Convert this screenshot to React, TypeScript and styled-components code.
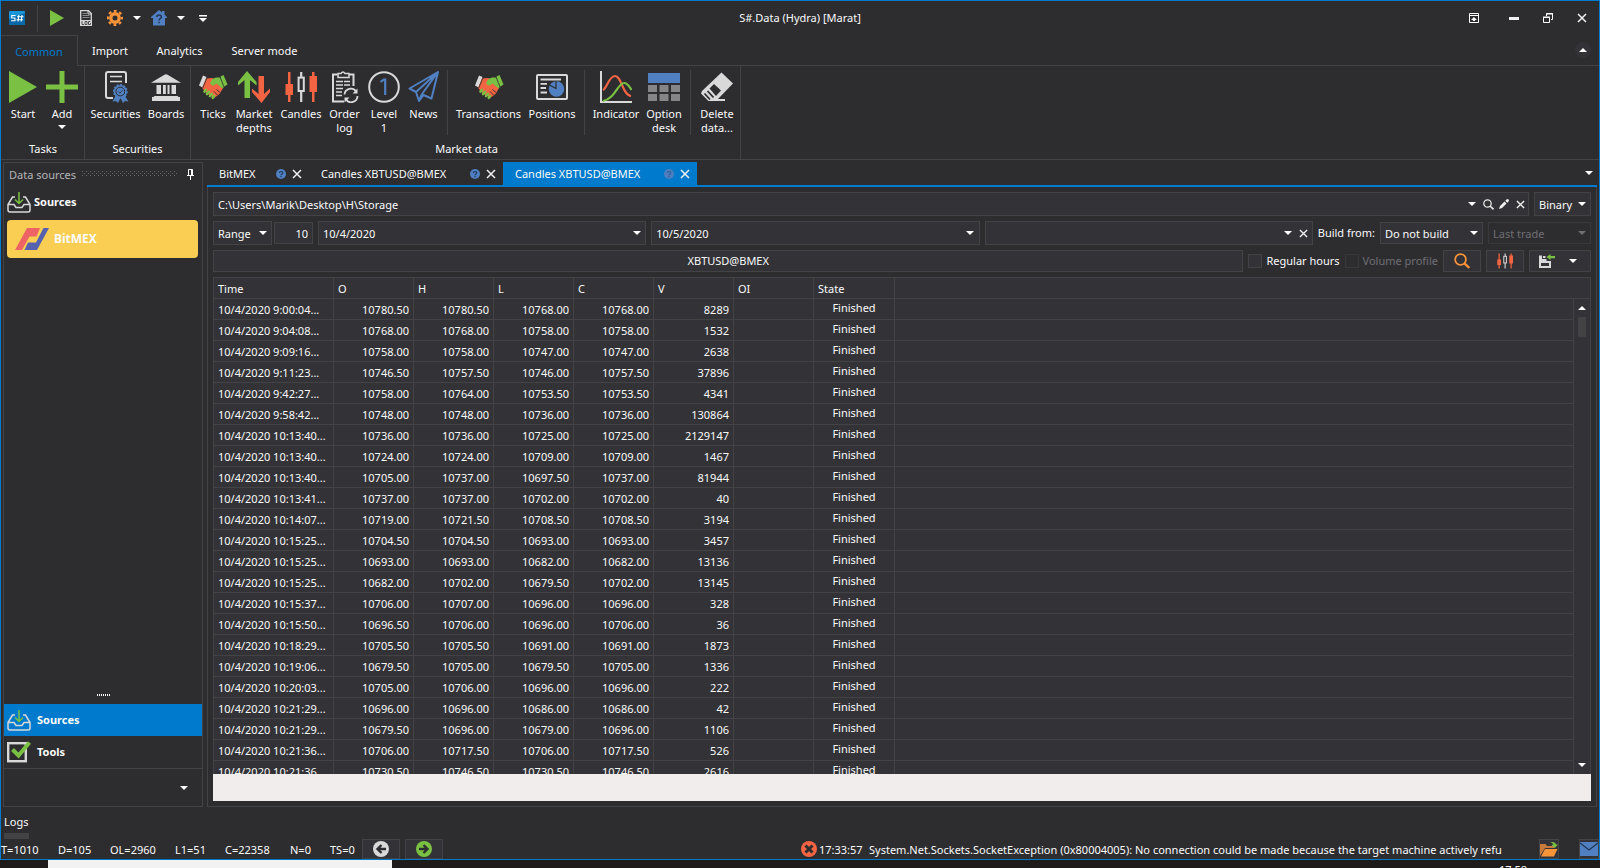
import React from 'react';
import styled, { createGlobalStyle } from 'styled-components';

const c = {
  bg: '#2d2d30',
  field: '#333337',
  line: '#434346',
  text: '#fafafa',
  dim: '#6f6f73',
  accent: '#007acc',
  green: '#7ac143',
  red: '#f26442',
  blue: '#5080c2',
  grey: '#d9d9d9',
  orange: '#f7943a',
};

const GlobalStyle = createGlobalStyle`
  * { box-sizing: border-box; }
  body {
    margin: 0;
    background: ${c.bg};
    color: ${c.text};
    font: 11px/14px "Noto Sans", "Open Sans", sans-serif;
  }
  button, input, select { font: inherit; color: inherit; margin: 0; }
  svg { display: block; flex: none; }
`;

const Page = styled.div`
  display: flex;
  flex-direction: column;
  height: 100vh;
  overflow: hidden;
`;

const Window = styled.div`
  flex: 1;
  min-height: 0;
  display: flex;
  flex-direction: column;
  border: 1px solid ${c.accent};
`;

const PlainButton = styled.button`
  display: flex;
  align-items: center;
  justify-content: center;
  padding: 0;
  border: 0;
  background: none;
`;

/* Title bar */
const TitleBar = styled.header`
  display: grid;
  grid-template-columns: 1fr auto 1fr;
  align-items: center;
  height: 34px;
  flex: none;
`;
const QuickAccess = styled.div`
  display: flex;
  align-items: center;
  padding-left: 8px;
`;
const QuickRule = styled.div`
  width: 1px;
  height: 27px;
  margin: 0 4px 0 12px;
  background: ${c.line};
`;
const ToolButton = styled(PlainButton)<{ $w: number; $h?: number }>`
  width: ${(p) => p.$w}px;
  height: ${(p) => p.$h ?? 26}px;
  flex: none;
`;
const Title = styled.h1`
  margin: 0;
  font-size: 11px;
  font-weight: 400;
`;
const WindowButtons = styled.div`
  display: flex;
  justify-content: flex-end;
`;

/* Ribbon */
const RibbonTabs = styled.nav`
  display: flex;
  height: 31px;
  flex: none;
`;
const RibbonTab = styled(PlainButton)<{ $w: number; $active?: boolean }>`
  width: ${(p) => p.$w}px;
  padding-top: 1px;
  border: solid ${c.line};
  border-width: ${(p) => (p.$active ? '1px 1px 0 0' : '0 0 1px')};
  color: ${(p) => (p.$active ? c.accent : c.text)};
`;
const RibbonTabFill = styled.div`
  flex: 1;
  display: flex;
  justify-content: flex-end;
  align-items: center;
  padding-right: 8px;
  border-bottom: 1px solid ${c.line};
`;
const Collapse = styled(PlainButton)`
  width: 16px;
  height: 16px;
  border-radius: 8px;
  background: ${c.field};
`;
const Ribbon = styled.div`
  display: flex;
  height: 94px;
  flex: none;
  border-bottom: 1px solid ${c.line};
`;
const Group = styled.section<{ $pad: string }>`
  display: flex;
  flex-direction: column;
  justify-content: space-between;
  padding: ${(p) => p.$pad};
  border-right: 1px solid ${c.line};
`;
const GroupItems = styled.div<{ $gap?: number }>`
  display: flex;
  gap: ${(p) => p.$gap ?? 0}px;
`;
const GroupName = styled.div`
  text-align: center;
`;
const GroupRule = styled.div`
  width: 1px;
  height: 65px;
  margin: 4px 4px 0 5px;
  background: ${c.line};
`;
const RibbonItem = styled.button<{ $w: number }>`
  width: ${(p) => p.$w}px;
  display: flex;
  flex-direction: column;
  align-items: center;
  gap: 4px;
  padding: 5px 0 0;
  border: 0;
  background: none;
  white-space: pre;
`;

/* Body */
const Body = styled.main`
  flex: 1;
  min-height: 0;
  display: flex;
  gap: 4px;
  padding: 2px 2px 0;
`;
const Side = styled.aside`
  width: 200px;
  flex: none;
  display: flex;
  flex-direction: column;
  border: 1px solid ${c.line};
`;
const SideHeader = styled.div`
  display: flex;
  align-items: center;
  gap: 6px;
  height: 23px;
  padding: 0 8px 0 5px;
  color: #b5b5b8;
`;
const Grip = styled.div`
  flex: 1;
  height: 6px;
  margin: 0 4px 2px 0;
  background:
    radial-gradient(circle at 0 0, #68686c 1px, transparent 1px) 0 0 / 4px 4px,
    radial-gradient(circle at 0 0, #68686c 1px, transparent 1px) 2px 2px / 4px 4px;
`;
const SideTitle = styled.h2`
  display: flex;
  align-items: center;
  gap: 3px;
  height: 32px;
  margin: 0;
  padding-left: 3px;
  font-size: 11px;
`;
const Source = styled(PlainButton)`
  justify-content: flex-start;
  gap: 5px;
  height: 38px;
  margin: 2px 4px auto 3px;
  padding-left: 8px;
  border-radius: 4px;
  background: #f9ce53;
  font-size: 12px;
  font-weight: 700;
`;
const Splitter = styled.div`
  width: 13px;
  height: 2px;
  margin: 0 auto 8px;
  background: repeating-linear-gradient(90deg, ${c.text} 0 1px, transparent 1px 2px);
`;
const SideTab = styled(PlainButton)<{ $active?: boolean }>`
  justify-content: flex-start;
  gap: 6px;
  height: 32px;
  padding-left: 3px;
  font-weight: 700;
  background: ${(p) => (p.$active ? c.accent : 'none')};
`;
const SideFooter = styled.div`
  display: flex;
  align-items: center;
  justify-content: flex-end;
  height: 38px;
  padding-right: 7px;
  border-top: 1px solid ${c.line};
`;

const Content = styled.section`
  flex: 1;
  min-width: 0;
  display: flex;
  flex-direction: column;
`;
const DocTabs = styled.div`
  display: flex;
  height: 25px;
  flex: none;
  border-bottom: 2px solid ${c.accent};
`;
const DocTab = styled.div<{ $w: number; $active?: boolean }>`
  width: ${(p) => p.$w}px;
  display: flex;
  align-items: center;
  gap: 5px;
  padding: 0 6px 0 12px;
  white-space: nowrap;
  background: ${(p) => (p.$active ? c.accent : 'none')};
`;
const DocName = styled(PlainButton)`
  flex: 1;
  justify-content: flex-start;
  padding-top: 1px;
`;
const DocTabFill = styled.div`
  flex: 1;
  display: flex;
  justify-content: flex-end;
`;
const Panel = styled.div`
  flex: 1;
  min-height: 0;
  display: flex;
  flex-direction: column;
  gap: 5px;
  padding: 5px 5px;
  border: solid ${c.line};
  border-width: 0 1px 1px;
`;
const Row = styled.div<{ $gap?: number }>`
  display: flex;
  align-items: center;
  gap: ${(p) => p.$gap ?? 5}px;
  flex: none;
`;
const Field = styled.div<{ $w?: number; $h?: number; $off?: boolean }>`
  ${(p) => (p.$w ? `width: ${p.$w}px; flex: none;` : 'flex: 1; min-width: 0;')}
  height: ${(p) => p.$h ?? 24}px;
  display: flex;
  align-items: center;
  border: 1px solid ${(p) => (p.$off ? '#39393c' : c.line)};
  background: ${(p) => (p.$off ? c.bg : c.field)};
  color: ${(p) => (p.$off ? c.dim : c.text)};
`;
const Input = styled.input<{ $right?: boolean }>`
  flex: 1;
  width: 0;
  min-width: 0;
  padding: 1px 4px 0;
  border: 0;
  outline: 0;
  background: none;
  text-align: ${(p) => (p.$right ? 'right' : 'left')};
`;
const Select = styled.select`
  flex: 1;
  width: 0;
  min-width: 0;
  padding: 1px 0 0 4px;
  border: 0;
  outline: 0;
  appearance: none;
  background: none;
  opacity: 1;
`;
const SelectArrow = styled.span`
  display: flex;
  justify-content: center;
  width: 17px;
`;
const Buttons = styled.div`
  display: flex;
`;
const PushButton = styled(PlainButton)<{ $w?: number; $h?: number }>`
  ${(p) => (p.$w ? `width: ${p.$w}px;` : 'flex: 1;')}
  height: ${(p) => p.$h ?? 22}px;
  border: 1px solid ${c.line};
  background: ${c.field};
`;
const SplitGlyphs = styled.span`
  display: flex;
  align-items: center;
  gap: 14px;
  padding-right: 4px;
`;
const RowLabel = styled.label`
  white-space: nowrap;
`;
const CheckLabel = styled.label<{ $off?: boolean }>`
  display: flex;
  align-items: center;
  gap: 4px;
  white-space: nowrap;
  color: ${(p) => (p.$off ? c.dim : c.text)};
`;
const Check = styled.input`
  appearance: none;
  width: 14px;
  height: 14px;
  border: 1px solid ${c.line};
  background: ${c.field};
  &:disabled { border-color: #38383b; background: ${c.bg}; }
`;

/* Candle grid */
const GridArea = styled.div`
  position: relative;
  flex: 1;
  min-height: 0;
  overflow: hidden;
  border: solid ${c.line};
  border-width: 1px 1px 0;
  background: ${c.field};
`;
const Table = styled.table`
  width: 100%;
  table-layout: fixed;
  border-collapse: separate;
  border-spacing: 0;
`;
const Th = styled.th<{ $w?: number }>`
  ${(p) => (p.$w ? `width: ${p.$w}px;` : '')}
  height: 21px;
  padding: 1px 4px 0;
  border: solid ${c.line};
  border-width: ${(p) => (p.$w ? '0 1px 1px 0' : '0 0 1px')};
  font-weight: 400;
  text-align: left;
`;
const Td = styled.td<{ $align?: 'right' | 'center'; $last?: boolean }>`
  height: 21px;
  padding: ${(p) => (p.$align === 'center' ? '0 4px 3px' : '1px 4px 0')};
  border: solid ${c.line};
  border-width: ${(p) => (p.$last ? '0 0 1px' : '0 1px 1px 0')};
  text-align: ${(p) => p.$align ?? 'left'};
  white-space: nowrap;
`;
const ScrollBar = styled.div`
  position: absolute;
  top: 21px;
  right: 0;
  bottom: 0;
  width: 17px;
  display: flex;
  flex-direction: column;
  align-items: center;
  border-left: 1px solid ${c.line};
  background: ${c.field};
`;
const Thumb = styled.div`
  width: 8px;
  height: 20px;
  margin-bottom: auto;
  background: ${c.line};
`;
const Footer = styled.div`
  height: 27px;
  margin-top: -5px;
  flex: none;
  background: #f1edec;
`;

/* Logs and status bar */
const Logs = styled.div`
  display: flex;
  flex-direction: column;
  gap: 4px;
  height: 32px;
  flex: none;
  padding: 8px 3px 0;
`;
const LogsMark = styled.div`
  width: 25px;
  height: 6px;
  background: ${c.line};
`;
const Status = styled.footer`
  display: flex;
  height: 20px;
  flex: none;
  align-items: center;
  justify-content: space-between;
  white-space: nowrap;
`;
const Cluster = styled.div<{ $gap: number }>`
  display: flex;
  align-items: center;
  gap: ${(p) => p.$gap}px;
`;
const Counter = styled.span<{ $w: number }>`
  width: ${(p) => p.$w}px;
  padding-top: 2px;
`;
const Message = styled.span`
  min-width: 650px;
  padding-top: 2px;
`;
const Taskbar = styled.div`
  display: flex;
  justify-content: space-between;
  height: 8px;
  flex: none;
  overflow: hidden;
  padding: 0 73px 0 48px;
  background: #1f1b1b;
`;
const TaskSearch = styled.div`
  width: 344px;
  background: #f2f2f2;
`;
const Clock = styled.div`
  padding-top: 3px;
`;

/* Icons */
const Arrow = ({ up, fill = '#fff' }: { up?: boolean; fill?: string }) => (
  <svg width="8" height="4" viewBox="0 0 8 4"><path d={up ? 'M0 4L4 0L8 4z' : 'M0 0H8L4 4z'} fill={fill} /></svg>
);
const Cross = ({ s = 10, w = 1.5 }: { s?: number; w?: number }) => (
  <svg width={s} height={s} viewBox="0 0 10 10"><path d="M1 1L9 9M9 1L1 9" stroke="#f1f1f1" strokeWidth={w} /></svg>
);
const Help = ({ on }: { on?: boolean }) => (
  <svg width="10" height="10" viewBox="0 0 10 10">
    <circle cx="5" cy="5" r="5" fill={on ? '#4f7fbe' : c.blue} />
    <path d="M3.4 4C3.4 2 6.7 2 6.7 3.9C6.7 5 5 4.9 5 6.2M5 7V8.2" fill="none" stroke={on ? '#2c5f9c' : '#23385c'} strokeWidth="1.2" />
  </svg>
);
const I32 = ({ children }: { children: React.ReactNode }) => (
  <svg width="32" height="32" viewBox="0 0 32 32" fill="none">{children}</svg>
);
const Start = () => <I32><path d="M2 0L30 16L2 32z" fill={c.green} /></I32>;
const Add = () => <I32><path d="M13.5 0h5v13.5H32v5H18.5V32h-5V18.5H0v-5h13.5z" fill={c.green} /></I32>;
const Securities = () => (
  <I32>
    <path d="M13 27H8a2 2 0 0 1-2-2V3a2 2 0 0 1 2-2H24a2 2 0 0 1 2 2V12" stroke={c.grey} strokeWidth="2" />
    <path d="M10 5.5H22M10 10.5H22" stroke={c.grey} strokeWidth="1.6" />
    <path d="M15.5 25L12.5 30.5L16 30L18 32L20.5 27L23 32L25 30L28.5 30.5L25 25z" fill={c.blue} />
    <circle cx="20.3" cy="20.5" r="6.6" fill={c.blue} stroke={c.blue} strokeWidth="1.6" strokeDasharray="2 1.4" />
    <circle cx="20.3" cy="20.5" r="4.4" stroke={c.bg} strokeWidth="1" />
    <path d="M18.2 20.5L19.8 22.2L22.6 19.2" stroke={c.bg} strokeWidth=".8" />
  </I32>
);
const Boards = () => (
  <I32>
    <path d="M1 11.8L14 4q2-1.5 4 0L31 11.8z" fill={c.grey} />
    <path d="M6.5 14H11V23H6.5zM13 14H15.8V23H13zM17.5 14H19.5V23H17.5zM21.5 14H26V23H21.5z" fill={c.grey} />
    <path d="M4.5 25H27.5L28.5 26H30V30H2V26H3.5z" fill={c.grey} />
  </I32>
);
const Shake = () => (
  <I32>
    <path d="M6 4.5L9.5 6L5.500 16.500L2 14.500z" fill={c.grey} />
    <path d="M23.500 5.500L26.500 4L30.500 13.500L27.500 15.500z" fill={c.green} />
    <path d="M9 7.500L15 7L19 8.500L26 17L22.500 23L17 27L10 22.500L5 17z" fill={c.red} />
    <path d="M13 12L15.500 8L19 6.500L24 6.500L27.800 15L25.500 17.500L19.500 12.500L16.500 14.500Q14.500 15 13 12z" fill={c.green} />
    <path d="M7.500 20.500l1.500-1.500M10 23l2-2M13 25l1.800-2M15.800 26.800l1.200-1.800" stroke={c.green} strokeWidth="2.600" strokeLinecap="round" />
    <path d="M17 20.500L20.500 24M19.500 18.500L23 21.500" stroke={c.bg} strokeWidth=".9" />
    <path d="M5.500 17.500L10.200 6.500M27 16L23 6" stroke={c.bg} strokeWidth=".8" />
  </I32>
);
const Depths = () => (
  <I32>
    <path d="M9 0L18.500 11V14.500L12 9V27H6.500V9L0 14.500V11z" fill={c.green} />
    <path d="M23.500 32L14 21V17.500L20.500 23V5H26V23L32 17.500V21z" fill={c.red} />
  </I32>
);
const CandlesIcon = ({ s = 32 }: { s?: number }) => (
  <svg width={s} height={s} viewBox="0 0 32 32" fill="none">
    <path d="M3 1h2.500V13H8V24H5.500V31H3V24H.5V13H3z" fill={c.red} />
    <path d="M27 1h2.500V5H32V21H29.500V31H27V21H24.500V5H27z" fill={c.red} />
    <path d="M16.200 1V6M16.200 20V31" stroke={c.grey} strokeWidth="2.200" />
    <rect x="13.600" y="6.600" width="5.200" height="13.400" stroke={c.grey} strokeWidth="2" />
  </svg>
);
const OrderLog = () => (
  <I32>
    <path d="M8.500 3.500H4V30.500H15M20 3.500H24.500V15" stroke={c.grey} strokeWidth="2" />
    <path d="M9 2.500H12Q14 -.5 16 2.500H20V6.500H9z" stroke={c.grey} strokeWidth="1.500" />
    <path d="M7 10.500H21M7 14H21M7 17.500H14M7 21H13M7 24.500H13" stroke={c.grey} strokeWidth="1.300" strokeDasharray="7 1 12" />
    <path d="M15.500 23.500A6.300 6.300 0 0 1 27 20.500M28.500 25A6.300 6.300 0 0 1 17 28.500" stroke={c.grey} strokeWidth="1.800" />
    <path d="M28.500 17.500V22.500H23.500zM15.500 31.500V26.500H20.500z" fill={c.grey} />
  </I32>
);
const Level = () => (
  <I32>
    <circle cx="16" cy="16" r="14.800" stroke={c.grey} strokeWidth="2" />
    <path d="M12.500 10.800L16 8.500H17.200V24" stroke={c.blue} strokeWidth="2.200" />
  </I32>
);
const News = () => (
  <I32>
    <path d="M30 1L1.500 17.500L8 21L11 30L15.500 24L23.500 27.500zM8 21L30 1L14 23M14 23L11 30M14 23L15.500 24" stroke={c.blue} strokeWidth="2" strokeLinejoin="round" />
  </I32>
);
const Positions = () => (
  <I32>
    <rect x="1" y="4" width="30" height="24" rx="1" stroke={c.grey} strokeWidth="2" />
    <path d="M4.500 8.500H25M4.500 12.800H11M4.500 17H10M4.500 21.500H11" stroke={c.grey} strokeWidth="1.800" />
    <circle cx="20.500" cy="18" r="7.700" fill={c.blue} />
    <path d="M20 10V17.500L13.500 14" stroke={c.bg} strokeWidth="1.200" />
  </I32>
);
const Indicator = () => (
  <I32>
    <path d="M1 0V31H32" stroke={c.grey} strokeWidth="2" />
    <path d="M3 19C7 17 9 5 15 5C21.500 5 22.500 24 31 25" stroke={c.red} strokeWidth="2.200" />
    <path d="M3 30C15 28 18 12 24 12C28 12 29.500 16 31.500 19" stroke={c.green} strokeWidth="2.200" />
  </I32>
);
const OptionDesk = () => (
  <I32>
    <path d="M0 2H32V12H0z" fill={c.blue} />
    <path d="M0 14H9V21H0zM11.500 14H20.500V21H11.500zM23 14H32V21H23zM0 23H9V30H0zM11.500 23H20.500V30H11.500zM23 23H32V30H23z" fill="#858588" />
  </I32>
);
const Eraser = () => (
  <I32>
    <path d="M20.500 1.500L32 12.500L17 28H24V30H7.500L0 22.500L1 20z" fill={c.grey} />
    <path d="M13 13L20 19.500L15 25L8.500 17.500z" fill={c.bg} />
    <path d="M6.500 20L12.500 26.500M3.500 22.500L9 28.500" stroke={c.bg} strokeWidth="1.800" />
  </I32>
);
const Tray = () => (
  <svg width="24" height="24" viewBox="0 0 24 24" fill="none">
    <path d="M8 7H5.500L1 14.500V20a2 2 0 0 0 2 2H21a2 2 0 0 0 2-2V14.500L18.500 7H16M1.500 14.500H7L9 17.500H15L17 14.500H22.500" stroke={c.grey} strokeWidth="1.500" />
    <path d="M12 2V13M8 9.500L12 13.500L16 9.500" stroke={c.green} strokeWidth="1.500" />
  </svg>
);
const Tools = () => (
  <svg width="24" height="22" viewBox="0 0 24 22" fill="none">
    <rect x="1.200" y="2.200" width="17.600" height="18" stroke={c.grey} strokeWidth="2.400" />
    <path d="M5.500 8.500L11.500 14.500L22.500 1.500" stroke={c.green} strokeWidth="4" />
  </svg>
);
const BitMex = () => (
  <svg width="34" height="22" viewBox="0 0 34 22">
    <path d="M12 0H25L21.500 8.500H14.500L7 22H0z" fill="#ee6363" />
    <path d="M28.500 0H34L22 22H9.500L13 14.500H21z" fill="#5661b0" />
  </svg>
);
const AppLogo = () => (
  <svg width="16" height="14" viewBox="0 0 16 14">
    <rect width="16" height="14" rx="1" fill="#1795d8" />
    <path d="M0 8L16 2V13a1 1 0 0 1-1 1H1a1 1 0 0 1-1-1z" fill="#0868a8" />
    <path d="M6.500 4.500H2.800V7H6V9.700H2M8 5.700H14.500M7.500 8.700H14M9.800 4L9 10.500M13 4L12.200 10.500" fill="none" stroke="#fff" strokeWidth="1.100" />
  </svg>
);
const QuickPlay = () => <svg width="14" height="16" viewBox="0 0 14 16"><path d="M0 0L14 8L0 16z" fill={c.green} /></svg>;
const LogFile = () => (
  <svg width="12" height="16" viewBox="0 0 12 16" fill="none">
    <path d="M.7 10V.7H8.500L11.300 3.500V10" stroke={c.grey} strokeWidth="1.300" />
    <path d="M8 0V4H12" stroke={c.grey} />
    <path d="M2.500 3.500H7M2.500 5.500H9.500M2.500 7.500H9.500" stroke="#8b8b8e" />
    <rect y="10" width="12" height="6" fill={c.grey} />
    <path d="M2 11V14.500H4M5 11.500H7V14.500H5zM10.500 11.500H8.500V14.500H10.500V13" stroke="#444" strokeWidth=".9" />
  </svg>
);
const Gear = () => (
  <svg width="16" height="16" viewBox="0 0 16 16" fill="none">
    <circle cx="8" cy="8" r="4.200" stroke={c.orange} strokeWidth="3.400" />
    <circle cx="8" cy="8" r="7" stroke={c.orange} strokeWidth="2.400" strokeDasharray="2.800 2.698" strokeDashoffset="1.400" />
  </svg>
);
const Home = () => (
  <svg width="16" height="16" viewBox="0 0 16 16">
    <path d="M8 0L11 2.500V1H13.500V4.500L16 7V8H14V15.500H2V8H0V7z" fill={c.blue} />
    <path d="M5.800 7C5.800 4.300 10.300 4.300 10.300 7C10.300 8.700 8 8.500 8 10.500M8 11.800V13.300" fill="none" stroke="#25344f" strokeWidth="1.500" />
  </svg>
);
const Customize = () => <svg width="8" height="7" viewBox="0 0 8 7"><path d="M0 0H8V1.500H0zM0 3H8L4 7z" fill="#fff" /></svg>;
const RibbonMode = () => (
  <svg width="10" height="10" viewBox="0 0 10 10"><path d="M.5 .5H9.500V9.500H.5zM0 2.500H10" fill="none" stroke="#fff" /><path d="M5 4L8 7H6V8H4V7H2z" fill="#fff" /></svg>
);
const Minimize = () => <svg width="10" height="3"><rect width="10" height="3" fill="#f1f1f1" /></svg>;
const Restore = () => (
  <svg width="10" height="10" viewBox="0 0 10 10" fill="none" stroke="#fff"><path d="M.5 4.500H6.500V9.500H.5zM0 4H7M3.500 3V.5H9.500V6.500H8M3 1H10" /></svg>
);
const Pin = () => <svg width="7" height="11" viewBox="0 0 7 11" fill="none" stroke="#fff"><path d="M1.500 6V.5H5.500V6M4.500 1V6M0 6.500H7M3.500 7V11" /></svg>;
const Lens = ({ s = 11, col = '#e6e6e6', w = 1.3 }: { s?: number; col?: string; w?: number }) => (
  <svg width={s} height={s} viewBox="0 0 11 11" fill="none" stroke={col} strokeWidth={w}><circle cx="4.500" cy="4.500" r="3.700" /><path d="M7 7L10.500 10.300" strokeWidth={w * 1.3} /></svg>
);
const Pencil = () => <svg width="10" height="10" viewBox="0 0 10 10" fill="#f1f1f1"><path d="M0 10L1 7L5.500 2.500L7.500 4.500L3 9zM6.300 1.700L7.500 .5Q8.500 -.3 9.500 .5Q10.300 1.500 9.500 2.500L8.300 3.700z" /></svg>;
const Save = () => (
  <svg width="16" height="14" viewBox="0 0 16 14">
    <path d="M0 1.500H3V5H7.500V7H12V14H0z" fill={c.grey} />
    <path d="M4 2H6.500V4H4z" fill={c.grey} /><path d="M2 9H10V12H2z" fill={c.field} />
    <path d="M7.500 3L11.500 0V2H16V4.200H11.500V6z" fill={c.green} />
  </svg>
);
const Round = ({ fill, children }: { fill: string; children: React.ReactNode }) => (
  <svg width="16" height="16" viewBox="0 0 16 16" fill="none"><circle cx="8" cy="8" r="8" fill={fill} />{children}</svg>
);
const FolderIcon = () => (
  <svg width="18" height="16" viewBox="0 0 18 16">
    <path d="M0 15V3H5.500L7 5H14V7H5z" fill="#c77a3c" /><path d="M5 8H17.500L14 15.500H1z" fill={c.orange} />
    <path d="M10 1.500C13 0 15.500 1.500 16 3.500H18L14.800 7L11.500 4L13.500 3.600C13 2.300 12 1.800 10 1.500z" fill={c.green} />
  </svg>
);
const Mail = () => <svg width="18" height="14" viewBox="0 0 18 14"><rect width="18" height="14" fill={c.blue} /><path d="M0 1L9 8L18 1" fill="none" stroke="#24344f" strokeWidth="1.300" /></svg>;

/* Data */
const rows = `9:00:04 10780.50 10780.50 10768.00 10768.00 8289
9:04:08 10768.00 10768.00 10758.00 10758.00 1532
9:09:16 10758.00 10758.00 10747.00 10747.00 2638
9:11:23 10746.50 10757.50 10746.00 10757.50 37896
9:42:27 10758.00 10764.00 10753.50 10753.50 4341
9:58:42 10748.00 10748.00 10736.00 10736.00 130864
10:13:40 10736.00 10736.00 10725.00 10725.00 2129147
10:13:40 10724.00 10724.00 10709.00 10709.00 1467
10:13:40 10705.00 10737.00 10697.50 10737.00 81944
10:13:41 10737.00 10737.00 10702.00 10702.00 40
10:14:07 10719.00 10721.50 10708.50 10708.50 3194
10:15:25 10704.50 10704.50 10693.00 10693.00 3457
10:15:25 10693.00 10693.00 10682.00 10682.00 13136
10:15:25 10682.00 10702.00 10679.50 10702.00 13145
10:15:37 10706.00 10707.00 10696.00 10696.00 328
10:15:50 10696.50 10706.00 10696.00 10706.00 36
10:18:29 10705.50 10705.50 10691.00 10691.00 1873
10:19:06 10679.50 10705.00 10679.50 10705.00 1336
10:20:03 10705.00 10706.00 10696.00 10696.00 222
10:21:29 10696.00 10696.00 10686.00 10686.00 42
10:21:29 10679.50 10696.00 10679.00 10696.00 1106
10:21:36 10706.00 10717.50 10706.00 10717.50 526
10:21:36 10730.50 10746.50 10730.50 10746.50 2616`.split('\n').map((r) => r.split(' '));

const columns: [string, number?][] = [['Time', 120], ['O', 80], ['H', 80], ['L', 80], ['C', 80], ['V', 80], ['OI', 80], ['State', 81], ['']];

const Item = ({ w, icon, label, drop }: { w: number; icon: React.ReactNode; label: string; drop?: boolean }) => (
  <RibbonItem $w={w}>{icon}<span>{label}</span>{drop && <Arrow />}</RibbonItem>
);

const Doc = ({ w, name, active }: { w: number; name: string; active?: boolean }) => (
  <DocTab $w={w} $active={active}>
    <DocName>{name}</DocName>
    <PlainButton aria-label="Help"><Help on={active} /></PlainButton>
    <ToolButton $w={12} $h={20} aria-label="Close"><Cross /></ToolButton>
  </DocTab>
);

const DropBox = ({ label, value, w, h, off }: { label: string; value: string; w: number; h?: number; off?: boolean }) => (
  <Field $w={w} $h={h} $off={off}>
    <Select aria-label={label} disabled={off}><option>{value}</option></Select>
    <SelectArrow><Arrow fill={off ? c.dim : '#fff'} /></SelectArrow>
  </Field>
);

const DateBox = ({ label, value }: { label: string; value: string }) => (
  <Field>
    <Input aria-label={label} defaultValue={value} />
    <ToolButton $w={17} $h={20} aria-label="Pick date"><Arrow /></ToolButton>
  </Field>
);

export default function App() {
  return (
    <Page>
      <GlobalStyle />
      <Window>
        <TitleBar>
          <QuickAccess>
            <AppLogo />
            <QuickRule />
            <ToolButton $w={30} aria-label="Start"><QuickPlay /></ToolButton>
            <ToolButton $w={28} aria-label="Log"><LogFile /></ToolButton>
            <ToolButton $w={30} aria-label="Settings"><Gear /></ToolButton>
            <ToolButton $w={14} aria-label="Settings menu"><Arrow /></ToolButton>
            <ToolButton $w={30} aria-label="Help"><Home /></ToolButton>
            <ToolButton $w={14} aria-label="Help menu"><Arrow /></ToolButton>
            <ToolButton $w={30} aria-label="Customize"><Customize /></ToolButton>
          </QuickAccess>
          <Title>S#.Data (Hydra) [Marat]</Title>
          <WindowButtons>
            <ToolButton $w={46} aria-label="Ribbon display"><RibbonMode /></ToolButton>
            <ToolButton $w={34} aria-label="Minimize"><Minimize /></ToolButton>
            <ToolButton $w={34} aria-label="Restore"><Restore /></ToolButton>
            <ToolButton $w={34} aria-label="Close"><Cross /></ToolButton>
          </WindowButtons>
        </TitleBar>

        <RibbonTabs>
          <RibbonTab $w={77} $active>Common</RibbonTab>
          <RibbonTab $w={64}>Import</RibbonTab>
          <RibbonTab $w={75}>Analytics</RibbonTab>
          <RibbonTab $w={95}>Server mode</RibbonTab>
          <RibbonTabFill><Collapse aria-label="Collapse ribbon"><Arrow up /></Collapse></RibbonTabFill>
        </RibbonTabs>

        <Ribbon>
          <Group $pad="0 2px 3px 3px">
            <GroupItems>
              <Item w={38} icon={<Start />} label="Start" />
              <Item w={40} icon={<Add />} label="Add" drop />
            </GroupItems>
            <GroupName>Tasks</GroupName>
          </Group>
          <Group $pad="0 4px 3px">
            <GroupItems $gap={4}>
              <Item w={53} icon={<Securities />} label="Securities" />
              <Item w={40} icon={<Boards />} label="Boards" />
            </GroupItems>
            <GroupName>Securities</GroupName>
          </Group>
          <Group $pad="0 1px 3px 3px">
            <GroupItems>
              <Item w={38} icon={<Shake />} label="Ticks" />
              <Item w={44} icon={<Depths />} label={'Market\ndepths'} />
              <Item w={50} icon={<CandlesIcon />} label="Candles" />
              <Item w={37} icon={<OrderLog />} label={'Order\nlog'} />
              <Item w={42} icon={<Level />} label={'Level\n1'} />
              <Item w={37} icon={<News />} label="News" />
              <GroupRule />
              <Item w={73} icon={<Shake />} label="Transactions" />
              <Item w={54} icon={<Positions />} label="Positions" />
              <GroupRule />
              <Item w={54} icon={<Indicator />} label="Indicator" />
              <Item w={42} icon={<OptionDesk />} label={'Option\ndesk'} />
              <GroupRule />
              <Item w={44} icon={<Eraser />} label={'Delete\ndata...'} />
            </GroupItems>
            <GroupName>Market data</GroupName>
          </Group>
        </Ribbon>

        <Body>
          <Side>
            <SideHeader>Data sources<Grip /><PlainButton aria-label="Pin"><Pin /></PlainButton></SideHeader>
            <SideTitle><Tray />Sources</SideTitle>
            <Source><BitMex />BitMEX</Source>
            <Splitter />
            <SideTab $active><Tray />Sources</SideTab>
            <SideTab><Tools />Tools</SideTab>
            <SideFooter><ToolButton $w={22} aria-label="More"><Arrow /></ToolButton></SideFooter>
          </Side>

          <Content>
            <DocTabs>
              <Doc w={102} name="BitMEX" />
              <Doc w={194} name="Candles XBTUSD@BMEX" />
              <Doc w={194} name="Candles XBTUSD@BMEX" active />
              <DocTabFill><ToolButton $w={16} $h={22} aria-label="Documents"><Arrow /></ToolButton></DocTabFill>
            </DocTabs>
            <Panel>
              <Row>
                <Field>
                  <Input aria-label="Storage" defaultValue="C:\Users\Marik\Desktop\H\Storage" />
                  <Buttons>
                    <ToolButton $w={16} $h={20} aria-label="Open list"><Arrow /></ToolButton>
                    <ToolButton $w={16} $h={20} aria-label="Find"><Lens /></ToolButton>
                    <ToolButton $w={16} $h={20} aria-label="Edit"><Pencil /></ToolButton>
                    <ToolButton $w={16} $h={20} aria-label="Clear"><Cross s={9} /></ToolButton>
                  </Buttons>
                </Field>
                <DropBox label="Format" value="Binary" w={57} />
              </Row>
              <Row>
                <Row $gap={2}>
                  <DropBox label="Series type" value="Range" w={59} />
                  <Field $w={39} $h={22}><Input $right aria-label="Range size" defaultValue="10" /></Field>
                </Row>
                <DateBox label="From" value="10/4/2020" />
                <DateBox label="To" value="10/5/2020" />
                <Field>
                  <Input aria-label="Filter" />
                  <Buttons>
                    <ToolButton $w={16} $h={20} aria-label="Open list"><Arrow /></ToolButton>
                    <ToolButton $w={16} $h={20} aria-label="Clear"><Cross s={9} /></ToolButton>
                  </Buttons>
                </Field>
                <RowLabel htmlFor="build">Build from:</RowLabel>
                <Field $w={103} $h={22}>
                  <Select id="build"><option>Do not build</option></Select>
                  <SelectArrow><Arrow /></SelectArrow>
                </Field>
                <DropBox label="Build field" value="Last trade" w={103} h={22} off />
              </Row>
              <Row>
                <PushButton>XBTUSD@BMEX</PushButton>
                <CheckLabel><Check type="checkbox" />Regular hours</CheckLabel>
                <CheckLabel $off><Check type="checkbox" disabled />Volume profile</CheckLabel>
                <PushButton $w={38} aria-label="Search"><Lens s={16} col={c.orange} w={1.2} /></PushButton>
                <PushButton $w={38} aria-label="Candle chart"><CandlesIcon s={16} /></PushButton>
                <PushButton $w={62} aria-label="Export"><SplitGlyphs><Save /><Arrow /></SplitGlyphs></PushButton>
              </Row>
              <GridArea>
                <Table>
                  <thead><tr>{columns.map(([name, w]) => <Th key={name} $w={w}>{name}</Th>)}</tr></thead>
                  <tbody>
                    {rows.map(([time, ...nums], i) => (
                      <tr key={i}>
                        <Td>10/4/2020 {time}...</Td>
                        {nums.map((n, k) => <Td key={k} $align="right">{n}</Td>)}
                        <Td />
                        <Td $align="center">Finished</Td>
                        <Td $last />
                      </tr>
                    ))}
                  </tbody>
                </Table>
                <ScrollBar>
                  <ToolButton $w={16} $h={18} aria-label="Scroll up"><Arrow up /></ToolButton>
                  <Thumb />
                  <ToolButton $w={16} $h={18} aria-label="Scroll down"><Arrow /></ToolButton>
                </ScrollBar>
              </GridArea>
              <Footer />
            </Panel>
          </Content>
        </Body>

        <Logs><span>Logs</span><LogsMark /></Logs>
        <Status>
          <Cluster $gap={5}>
            <Cluster $gap={0}>
              <Counter $w={57}>T=1010</Counter>
              <Counter $w={52}>D=105</Counter>
              <Counter $w={65}>OL=2960</Counter>
              <Counter $w={50}>L1=51</Counter>
              <Counter $w={65}>C=22358</Counter>
              <Counter $w={40}>N=0</Counter>
              <Counter $w={27}>TS=0</Counter>
            </Cluster>
            <PushButton $w={38} $h={20} aria-label="Back"><Round fill={c.grey}><path d="M13 8H5M8.500 4L4.500 8L8.500 12" stroke="#2d2d30" strokeWidth="2.400" /></Round></PushButton>
            <PushButton $w={38} $h={20} aria-label="Forward"><Round fill={c.green}><path d="M3 8H11M7.500 4L11.500 8L7.500 12" stroke="#2d2d30" strokeWidth="2.400" /></Round></PushButton>
          </Cluster>
          <Cluster $gap={20}>
            <Cluster $gap={2}>
              <Round fill={c.red}><path d="M4.500 4.500L11.500 11.500M11.500 4.500L4.500 11.500" stroke="#2d2d30" strokeWidth="3" /></Round>
              <Counter $w={48}>17:33:57</Counter>
              <Message>System.Net.Sockets.SocketException (0x80004005): No connection could be made because the target machine actively refu</Message>
            </Cluster>
            <PushButton $w={20} $h={20} aria-label="Open logs folder"><FolderIcon /></PushButton>
            <PushButton $w={20} $h={20} aria-label="Messages"><Mail /></PushButton>
          </Cluster>
        </Status>
      </Window>
      <Taskbar><TaskSearch /><Clock>17:58</Clock></Taskbar>
    </Page>
  );
}
